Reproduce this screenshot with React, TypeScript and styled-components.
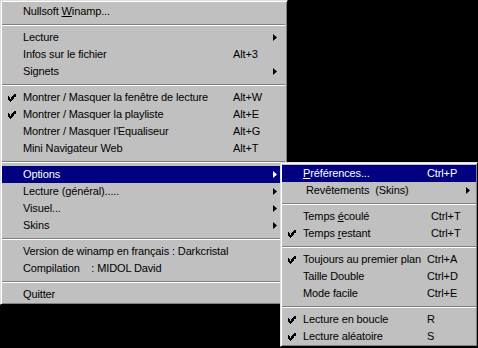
import React from "react";
import styled, { createGlobalStyle } from "styled-components";

const GlobalStyle = createGlobalStyle`
  html, body { margin: 0; padding: 0; background: #000; }
  body { font-family: "Liberation Sans", Arial, sans-serif; }
`;

const Screen = styled.div`
  position: relative;
  width: 478px;
  height: 348px;
  overflow: hidden;
  background: #000;
`;

const Menu = styled.div<{ $width: number; $cols: string }>`
  box-sizing: border-box;
  width: ${(p) => p.$width}px;
  background: #c0c0c0;
  border: 1px solid;
  border-color: #dfdfdf #000 #000 #dfdfdf;
  box-shadow: inset 1px 1px #fff, inset -1px -1px #808080;
  padding: 2px 1px 1px 1px;
  display: grid;
  grid-template-columns: ${(p) => p.$cols};
  font-family: "Liberation Sans", Arial, sans-serif;
  font-size: 11px;
  letter-spacing: -0.13px;
  color: #000;
`;

const SubMenu = styled(Menu)`
  position: absolute;
  left: 280px;
  top: 162px;
`;

const Row = styled.div<{ $active?: boolean }>`
  grid-column: 1 / -1;
  display: grid;
  grid-template-columns: subgrid;
  height: 17px;
  line-height: 17px;
  align-items: center;
  white-space: pre;
  background: ${(p) => (p.$active ? "#000080" : "transparent")};
  color: ${(p) => (p.$active ? "#fff" : "#000")};
`;

const CheckCell = styled.span`
  display: flex;
  justify-content: flex-start;
  padding-left: 5px;
  align-items: center;
  height: 17px;
`;

const Label = styled.span<{ $indent?: number }>`
  padding-left: ${(p) => p.$indent ?? 0}px;
  overflow: visible;
`;

const Shortcut = styled.span<{ $indent?: number }>`
  padding-left: ${(p) => p.$indent ?? 0}px;
`;

const ArrowCell = styled.span`
  display: flex;
  align-items: center;
  height: 17px;
`;

const Sep = styled.div`
  grid-column: 1 / -1;
  height: 9px;
  display: flex;
  align-items: center;
`;

const SepLine = styled.div`
  width: 100%;
  height: 0;
  border-top: 1px solid #808080;
  border-bottom: 1px solid #fff;
`;

const U = styled.span`
  text-decoration: underline;
  text-underline-offset: 1px;
`;

const Check = () => (
  <svg width="9" height="8" viewBox="0 0 7 7" fill="currentColor" shapeRendering="crispEdges">
    <path d="M6 0h1v1h-1z M5 1h2v1h-2z M0 2h1v1h-1z M4 2h3v1h-3z M0 3h2v1h-2z M3 3h3v1h-3z M0 4h5v1h-5z M1 5h3v1h-3z M2 6h1v1h-1z" />
  </svg>
);

const Arrow = () => (
  <svg width="4" height="7" viewBox="0 0 4 7" fill="currentColor">
    <path d="M0 0 L4 3.5 L0 7 Z" />
  </svg>
);

type Item =
  | "sep"
  | {
      label: React.ReactNode;
      indent?: number;
      shortcut?: string;
      scIndent?: number;
      check?: boolean;
      arrow?: boolean;
      active?: boolean;
    };

const mainItems: Item[] = [
  { label: <>Nullsoft <U>W</U>inamp...</> },
  "sep",
  { label: "Lecture", arrow: true },
  { label: "Infos sur le fichier", shortcut: "Alt+3" },
  { label: "Signets", arrow: true },
  "sep",
  { label: "Montrer / Masquer la fenêtre de lecture", shortcut: "Alt+W", check: true },
  { label: "Montrer / Masquer la playliste", shortcut: "Alt+E", check: true },
  { label: "Montrer / Masquer l'Equaliseur", shortcut: "Alt+G" },
  { label: "Mini Navigateur Web", shortcut: "Alt+T" },
  "sep",
  { label: "Options", arrow: true, active: true },
  { label: "Lecture (général).....", arrow: true },
  { label: "Visuel...", arrow: true },
  { label: "Skins", arrow: true },
  "sep",
  { label: "Version de winamp en français : Darkcristal" },
  { label: "Compilation    : MIDOL David" },
  "sep",
  { label: "Quitter" },
];

const subItems: Item[] = [
  { label: <><U>P</U>références...</>, shortcut: "Ctrl+P", active: true },
  { label: "Revêtements  (Skins)", indent: 3, arrow: true },
  "sep",
  { label: <>Temps <U>é</U>coulé</>, shortcut: "Ctrl+T", scIndent: 4 },
  { label: <>Temps <U>r</U>estant</>, shortcut: "Ctrl+T", scIndent: 4, check: true },
  "sep",
  { label: "Toujours au premier plan", shortcut: "Ctrl+A", check: true },
  { label: "Taille Double", shortcut: "Ctrl+D" },
  { label: "Mode facile", shortcut: "Ctrl+E" },
  "sep",
  { label: "Lecture en boucle", shortcut: "R", check: true },
  { label: "Lecture aléatoire", shortcut: "S", check: true },
];

const renderItems = (items: Item[]) =>
  items.map((it, i) =>
    it === "sep" ? (
      <Sep key={i}>
        <SepLine />
      </Sep>
    ) : (
      <Row key={i} $active={it.active}>
        <CheckCell>{it.check ? <Check /> : null}</CheckCell>
        <Label $indent={it.indent}>{it.label}</Label>
        <Shortcut $indent={it.scIndent}>{it.shortcut ?? ""}</Shortcut>
        <ArrowCell>{it.arrow ? <Arrow /> : null}</ArrowCell>
      </Row>
    )
  );

export default function App() {
  return (
    <>
      <GlobalStyle />
      <Screen>
        <Menu $width={288} $cols="21px 210px 40px 12px">
          {renderItems(mainItems)}
        </Menu>
        <SubMenu $width={198} $cols="21px 124px 39px 10px">
          {renderItems(subItems)}
        </SubMenu>
      </Screen>
    </>
  );
}
